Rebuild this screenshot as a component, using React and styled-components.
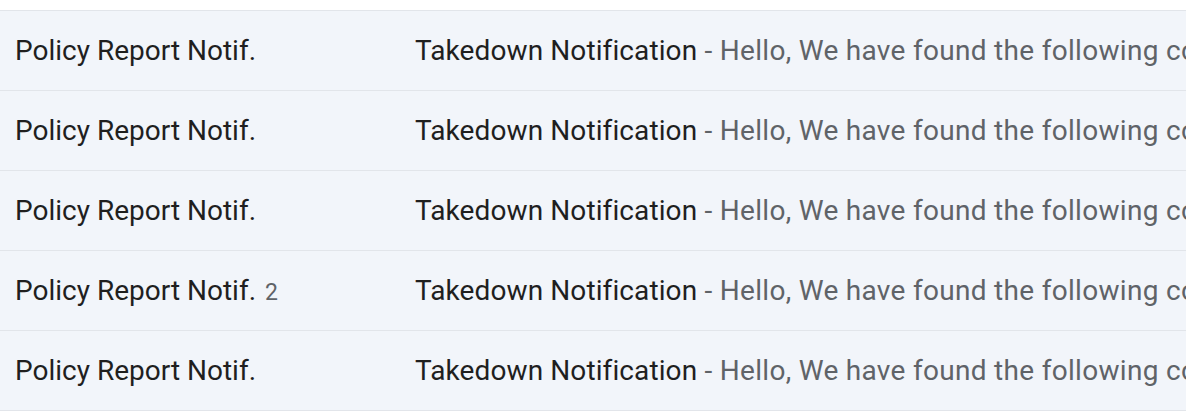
import React from "react";
import styled, { createGlobalStyle } from "styled-components";

const rows = [
	{ sender: "Policy Report Notif.", count: null },
	{ sender: "Policy Report Notif.", count: null },
	{ sender: "Policy Report Notif.", count: null },
	{ sender: "Policy Report Notif.", count: 2 },
	{ sender: "Policy Report Notif.", count: null },
];

const GlobalStyle = createGlobalStyle`
	html, body {
		margin: 0;
		padding: 0;
		background: #ffffff;
		overflow: hidden;
	}
	body {
		font-family: Roboto, "Noto Sans", Arial, sans-serif;
	}
`;

function App() {
	return (
		<>
			<GlobalStyle />
			<Page>
				<List>
					{rows.map((row, index) => (
						<Row key={index}>
							<Sender>
								{row.sender}
								{row.count && <Count>{row.count}</Count>}
							</Sender>
							<Message>
								<Subject>Takedown Notification</Subject>
								<Snippet> - Hello, We have found the following content</Snippet>
							</Message>
						</Row>
					))}
				</List>
			</Page>
		</>
	);
}

export default App;

const Page = styled.div`
	width: 1186px;
	height: 418px;
	padding-top: 10px;
	box-sizing: border-box;
	background: #ffffff;
	overflow: hidden;
`;

const List = styled.div`
	display: flex;
	flex-direction: column;
	background: #f2f5fa;
	border-bottom: 1px solid #e2e5ea;
`;

const Row = styled.div`
	display: grid;
	grid-template-columns: 400px 1fr;
	align-items: center;
	height: 80px;
	box-sizing: border-box;
	border-top: 1px solid #e2e5ea;
	padding-left: 15px;
	font-size: 28px;
	color: #1f1f1f;
	white-space: nowrap;
	overflow: hidden;
`;

const Sender = styled.div`
	display: flex;
	align-items: baseline;
	gap: 9px;
	overflow: hidden;
`;

const Count = styled.span`
	font-size: 23px;
	color: #5f6368;
`;

const Message = styled.div`
	overflow: hidden;
	white-space: nowrap;
	letter-spacing: 0.1px;
`;

const Subject = styled.span`
	color: #1f1f1f;
`;

const Snippet = styled.span`
	color: #5f6368;
	letter-spacing: 0.3px;
`;
